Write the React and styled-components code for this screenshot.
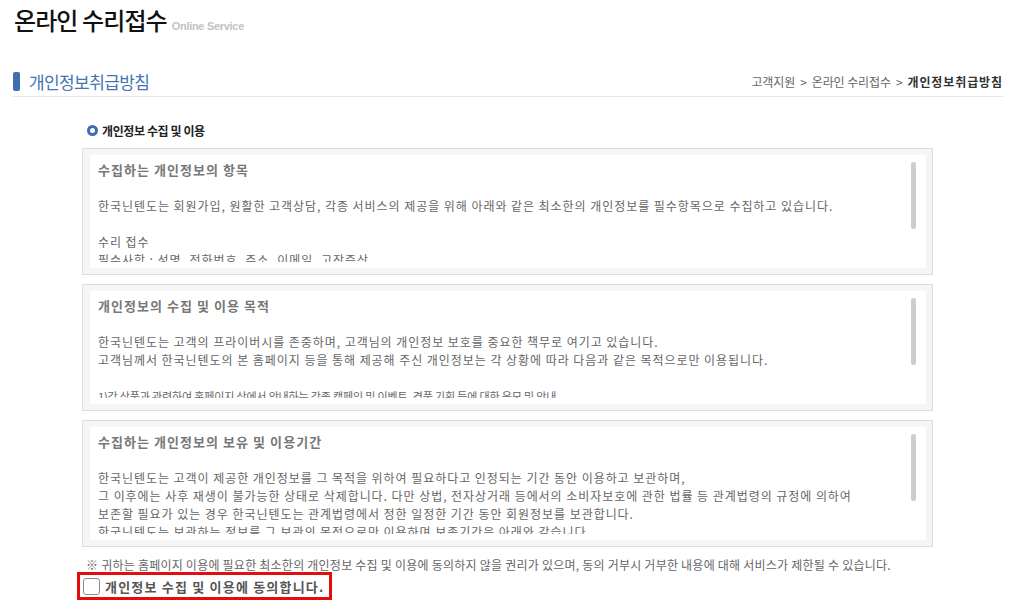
import React from "react";
import styled, { createGlobalStyle } from "styled-components";

const GlobalStyle = createGlobalStyle`
  html, body { margin: 0; padding: 0; background: #fff; }
  body {
    font-family: "Noto Sans CJK KR", "Noto Sans", sans-serif;
    font-size: 12px;
    color: #666;
  }
`;

const Page = styled.div`
  width: 990px;
  padding-left: 13px;
`;

const TitleRow = styled.div`
  display: flex;
  align-items: baseline;
  gap: 5px;
  padding-top: 4px;
  padding-left: 1px;
`;

const PageTitle = styled.h1`
  margin: 0;
  font-size: 24px;
  line-height: 31px;
  font-weight: 500;
  color: #111;
  letter-spacing: -0.9px;
`;

const TitleEn = styled.span`
  font-family: "Liberation Sans", Arial, sans-serif;
  font-size: 11px;
  font-weight: bold;
  color: #c2c2c2;
  letter-spacing: -0.3px;
`;

const SectionHeader = styled.div`
  margin-top: 31px;
  height: 30px;
  display: flex;
  align-items: center;
  justify-content: space-between;
  border-bottom: 1px solid #e6e6e6;
`;

const SectionTitle = styled.h2`
  margin: 0;
  display: flex;
  align-items: center;
  gap: 9px;
  font-size: 17px;
  font-weight: 400;
  color: #4374b3;
  letter-spacing: -0.6px;
`;

const BlueBar = styled.span`
  display: block;
  width: 7px;
  height: 19px;
  border-radius: 2px;
  background: #3f6fae;
`;

const Breadcrumb = styled.div`
  display: flex;
  align-items: center;
  gap: 5px;
  font-size: 12px;
  color: #666;
`;

const Crumb = styled.span`
  color: ${(p) => (p.$current ? "#333" : "#666")};
  font-weight: ${(p) => (p.$current ? 700 : 400)};
  letter-spacing: ${(p) => (p.$current ? "0.9px" : "-0.1px")};
`;

const Content = styled.div`
  margin-left: 69px;
  width: 851px;
`;

const SubHeading = styled.h3`
  margin: 24px 0 0 5px;
  height: 18px;
  display: flex;
  align-items: center;
  gap: 4px;
  font-size: 12px;
  font-weight: 700;
  color: #222;
  letter-spacing: -0.4px;
`;

const Ring = styled.span`
  display: block;
  width: 5px;
  height: 5px;
  border-radius: 50%;
  border: 3px solid #3d6db0;
  background: #fff;
`;

const TermsBox = styled.div`
  box-sizing: border-box;
  height: 127px;
  margin-top: 9px;
  border: 1px solid #dcdcdc;
  background: #f5f5f5;
  padding: 6px 6px 6px 7px;
`;

const TermsInner = styled.div`
  position: relative;
  height: 101px;
  background: #fff;
  padding: 6px 0 6px 8px;
`;

const TermsScroll = styled.div`
  height: 101px;
  overflow: hidden;
  line-height: 18px;
  color: #666;
  font-size: 12px;
  letter-spacing: 0.95px;
`;

const TermsTitle = styled.p`
  margin: 0 0 18px;
  font-size: 13px;
  font-weight: 700;
  color: #777;
  letter-spacing: 1.05px;
`;

const TermsLine = styled.p`
  margin: 0;
  min-height: 18px;
  white-space: nowrap;
  font-size: ${(p) => (p.$small ? "11px" : "12px")};
  letter-spacing: ${(p) => (p.$small ? "-0.15px" : "0.95px")};
`;

const Thumb = styled.span`
  position: absolute;
  top: 7px;
  right: 10px;
  width: 5px;
  height: 67px;
  border-radius: 3px;
  background: #cdcdcd;
`;

const Notice = styled.p`
  margin: 11px 0 0 4px;
  line-height: 14px;
  font-size: 12px;
  color: #666;
  white-space: nowrap;
  letter-spacing: 0.23px;
`;

const AgreeLabel = styled.label`
  box-sizing: border-box;
  margin-left: -5px;
  display: inline-flex;
  align-items: center;
  gap: 5px;
  width: 255px;
  height: 28px;
  border: 3px solid #e30d0d;
  padding-left: 3px;
  font-size: 13px;
  font-weight: 700;
  color: #555;
  letter-spacing: 1.2px;
  white-space: nowrap;
  cursor: pointer;
`;

const CheckBox = styled.span`
  box-sizing: border-box;
  display: block;
  flex: none;
  width: 17px;
  height: 17px;
  border: 1px solid #8a8a8a;
  border-radius: 3px;
  background: #fff;
`;

const sections = [
  {
    title: "수집하는 개인정보의 항목",
    lines: [
      { t: "한국닌텐도는 회원가입, 원활한 고객상담, 각종 서비스의 제공을 위해 아래와 같은 최소한의 개인정보를 필수항목으로 수집하고 있습니다." },
      { t: "" },
      { t: "수리 접수" },
      { t: "필수사항 : 성명, 전화번호, 주소, 이메일, 고장증상" },
      { t: "" },
    ],
  },
  {
    title: "개인정보의 수집 및 이용 목적",
    lines: [
      { t: "한국닌텐도는 고객의 프라이버시를 존중하며, 고객님의 개인정보 보호를 중요한 책무로 여기고 있습니다." },
      { t: "고객님께서 한국닌텐도의 본 홈페이지 등을 통해 제공해 주신 개인정보는 각 상황에 따라 다음과 같은 목적으로만 이용됩니다." },
      { t: "" },
      { t: "1)각 상품과 관련하여 홈페이지 상에서 안내하는 각종 캠페인 및 이벤트, 경품 기획 등에 대한 응모 및 안내", small: true },
      { t: "2)고객 문의 및 수리 접수에 대한 처리 및 결과 안내", small: true },
    ],
  },
  {
    title: "수집하는 개인정보의 보유 및 이용기간",
    lines: [
      { t: "한국닌텐도는 고객이 제공한 개인정보를 그 목적을 위하여 필요하다고 인정되는 기간 동안 이용하고 보관하며," },
      { t: "그 이후에는 사후 재생이 불가능한 상태로 삭제합니다. 다만 상법, 전자상거래 등에서의 소비자보호에 관한 법률 등 관계법령의 규정에 의하여" },
      { t: "보존할 필요가 있는 경우 한국닌텐도는 관계법령에서 정한 일정한 기간 동안 회원정보를 보관합니다." },
      { t: "한국닌텐도는 보관하는 정보를 그 보관의 목적으로만 이용하며 보존기간은 아래와 같습니다." },
      { t: "" },
    ],
  },
];

export default function App() {
  return (
    <>
      <GlobalStyle />
      <Page>
        <TitleRow>
          <PageTitle>온라인 수리접수</PageTitle>
          <TitleEn>Online Service</TitleEn>
        </TitleRow>

        <SectionHeader>
          <SectionTitle>
            <BlueBar />
            개인정보취급방침
          </SectionTitle>
          <Breadcrumb>
            <Crumb>고객지원</Crumb>
            <Crumb>&gt;</Crumb>
            <Crumb>온라인 수리접수</Crumb>
            <Crumb>&gt;</Crumb>
            <Crumb $current>개인정보취급방침</Crumb>
          </Breadcrumb>
        </SectionHeader>

        <Content>
          <SubHeading>
            <Ring />
            개인정보 수집 및 이용
          </SubHeading>

          {sections.map((s) => (
            <TermsBox key={s.title}>
              <TermsInner>
                <TermsScroll>
                  <TermsTitle>{s.title}</TermsTitle>
                  {s.lines.map((l, i) => (
                    <TermsLine key={i} $small={l.small}>
                      {l.t}
                    </TermsLine>
                  ))}
                </TermsScroll>
                <Thumb />
              </TermsInner>
            </TermsBox>
          ))}

          <Notice>
            ※ 귀하는 홈페이지 이용에 필요한 최소한의 개인정보 수집 및 이용에 동의하지 않을 권리가 있으며, 동의 거부시 거부한 내용에 대해 서비스가 제한될 수 있습니다.
          </Notice>

          <AgreeLabel>
            <CheckBox />
            개인정보 수집 및 이용에 동의합니다.
          </AgreeLabel>
        </Content>
      </Page>
    </>
  );
}
